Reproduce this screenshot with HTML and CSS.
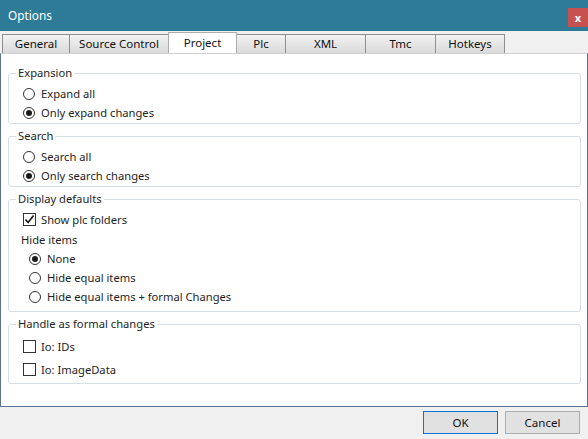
FILE: index.html
```html
<!DOCTYPE html>
<html lang="en">
<head>
    <meta charset="UTF-8">
    <title>Options</title>
    <link rel="stylesheet" href="styles.css">
</head>
<body>

<div class="window">
    <div class="titlebar">
        <span class="title">Options</span>
        <span class="close">x</span>
    </div>

    <!-- Tabs -->
    <div class="tabs">
        <div class="tab w-general">General</div>
        <div class="tab w-source">Source Control</div>
        <div class="tab selected w-project">Project</div>
        <div class="tab w-plc">Plc</div>
        <div class="tab w-xml">XML</div>
        <div class="tab w-tmc">Tmc</div>
        <div class="tab w-hotkeys">Hotkeys</div>
    </div>

    <div class="panel">
        <fieldset class="group">
            <legend>Expansion</legend>
            <div class="row"><span class="radio"></span>Expand all</div>
            <div class="row"><span class="radio checked"></span>Only expand changes</div>
        </fieldset>

        <fieldset class="group">
            <legend>Search</legend>
            <div class="row"><span class="radio"></span>Search all</div>
            <div class="row"><span class="radio checked"></span>Only search changes</div>
        </fieldset>

        <fieldset class="group display">
            <legend>Display defaults</legend>
            <div class="row">
                <span class="check">
                    <svg width="11" height="11" viewBox="0 0 11 11"><path d="M1.5 5.5 L4.2 8.5 L9.5 1.5" fill="none" stroke="#1a1a1a" stroke-width="1.6"/></svg>
                </span>Show plc folders
            </div>
            <div class="sublabel">Hide items</div>
            <div class="row sub"><span class="radio checked"></span>None</div>
            <div class="row sub"><span class="radio"></span>Hide equal items</div>
            <div class="row sub"><span class="radio"></span>Hide equal items + formal Changes</div>
        </fieldset>

        <fieldset class="group formal">
            <legend>Handle as formal changes</legend>
            <div class="row"><span class="check"></span>Io: IDs</div>
            <div class="row"><span class="check"></span>Io: ImageData</div>
        </fieldset>
    </div>

    <div class="footer">
        <button class="btn default">OK</button>
        <button class="btn">Cancel</button>
    </div>
</div>

</body>
</html>
```

FILE: styles.css
```css
body {
    margin: 0;
    padding: 0;
    font-family: "Noto Sans", "Open Sans", sans-serif;
    font-size: 11.2px;
    color: #1e1e1e;
    background-color: #f0f0f0;
}

.window {
    width: 588px;
    height: 439px;
    display: flex;
    flex-direction: column;
}

.titlebar {
    height: 31px;
    background-color: #2e7b97;
    color: #ffffff;
    display: flex;
    align-items: center;
    justify-content: space-between;
    padding-left: 8px;
    box-sizing: border-box;
}

.title {
    font-size: 11.8px;
    margin-top: -1px;
}

.close {
    width: 20px;
    height: 19px;
    margin-top: 3px;
    background-color: #c75050;
    color: #ffffff;
    font-weight: bold;
    font-size: 11px;
    display: flex;
    align-items: center;
    justify-content: center;
}

.tabs {
    height: 22px;
    display: flex;
    align-items: flex-end;
    padding-left: 2px;
}

.tab {
    height: 19px;
    box-sizing: border-box;
    border: 1px solid #8f8f8f;
    border-bottom: none;
    background: linear-gradient(#f2f2f2, #dadada);
    text-align: center;
    line-height: 17px;
    color: #111;
    margin-right: -1px;
    font-size: 11.5px;
}

.tab.selected {
    height: 21px;
    background: #ffffff;
    border-color: #acacac;
    line-height: 19px;
    position: relative;
    z-index: 1;
}

.w-general { width: 68px; }
.w-source { width: 100px; }
.w-project { width: 69px; }
.w-plc { width: 50px; }
.w-xml { width: 81px; }
.w-tmc { width: 71px; }
.w-hotkeys { width: 70px; }

.panel {
    height: 354px;
    box-sizing: border-box;
    background-color: #ffffff;
    border: 1px solid #5b7290;
    border-top: 1px solid #d0d0d0;
    padding: 12px 6px 0 7px;
    display: flex;
    flex-direction: column;
    gap: 5px;
}

.group {
    margin: 0;
    border: 1px solid #d5dfe5;
    border-radius: 3px;
    padding: 4px 0 1px 14px;
}

.group legend {
    padding: 0 2px;
    margin-left: -7px;
    line-height: 14px;
}

.row {
    height: 19px;
    display: flex;
    align-items: center;
}

.radio {
    width: 12px;
    height: 12px;
    box-sizing: border-box;
    border: 1px solid #333;
    border-radius: 50%;
    margin-right: 6px;
    display: flex;
    align-items: center;
    justify-content: center;
}

.radio.checked::after {
    content: "";
    width: 6px;
    height: 6px;
    border-radius: 50%;
    background-color: #1a1a1a;
}

.check {
    width: 13px;
    height: 13px;
    box-sizing: border-box;
    border: 1px solid #333;
    margin-right: 5px;
    display: flex;
    align-items: center;
    justify-content: center;
}

.sublabel {
    height: 20px;
    line-height: 22px;
    margin-left: -2px;
}

.row.sub {
    padding-left: 6px;
}

.display {
    padding-bottom: 5px;
}

.formal {
    padding-bottom: 2px;
}

.formal .row {
    height: 23px;
}

.footer {
    flex: 1;
    display: flex;
    justify-content: flex-end;
    align-items: flex-start;
    padding: 4px 8px 0 0;
    gap: 7px;
}

.btn {
    width: 75px;
    height: 23px;
    background-color: #e1e1e1;
    border: 1px solid #adadad;
    font-family: "Noto Sans", "Open Sans", sans-serif;
    font-size: 11.5px;
    color: #111;
    padding: 0;
}

.btn.default {
    border-color: #0078d7;
}
```
